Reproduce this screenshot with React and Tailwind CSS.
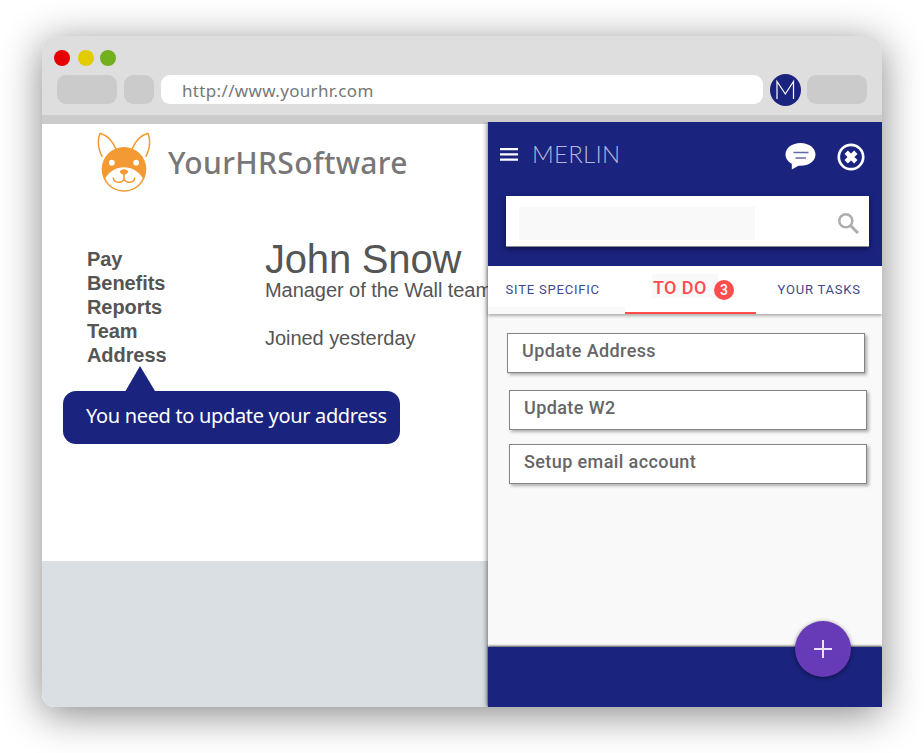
import React from "react";

const navItems = ["Pay", "Benefits", "Reports", "Team", "Address"];

function FoxLogo() {
  return (
    <svg className="h-[62px] w-[56px] shrink-0" viewBox="198 318 168 186" fill="none">
      <path d="M216 394 C205 372 202 346 210 325 C231 331 248 350 257 370" stroke="#f49a33" strokeWidth="4.5" strokeLinecap="round" strokeLinejoin="round" />
      <path d="M348 394 C359 372 362 346 354 325 C333 331 316 350 307 370" stroke="#f49a33" strokeWidth="4.5" strokeLinecap="round" strokeLinejoin="round" />
      <circle cx="282" cy="433" r="67" fill="#f49a33" />
      <path d="M226 459 C240 438 259 427 282 427 C305 427 324 438 338 459 C329 482 307 496 282 496 C257 496 235 482 226 459Z" fill="#fff" />
      <circle cx="245.500" cy="413" r="8.500" fill="#fff" />
      <circle cx="318.500" cy="413" r="8.500" fill="#fff" />
      <path d="M269 440 C272 430 292 430 295 440 C293 445 287 448 282 449 C277 448 271 445 269 440Z" fill="#f49a33" />
      <path d="M250 459 C250 475 279 476 282 460 V447 V460 C285 476 314 475 314 459" stroke="#f49a33" strokeWidth="4.500" strokeLinecap="round" />
    </svg>
  );
}

function BrowserBar() {
  return (
    <header className="h-[79px] rounded-t-[14px] bg-[#dedede] pt-[13.5px]">
      <div className="flex pl-[12.3px]">
        <span className="size-[16px] rounded-full bg-[#e60000]" />
        <span className="ml-[8px] size-[16px] rounded-full bg-[#e2cb00]" />
        <span className="ml-[6px] size-[16px] rounded-full bg-[#72b01d]" />
      </div>
      <div className="mt-[8.5px] flex items-start pl-[15px]">
        <span className="mt-[1px] h-[29px] w-[60px] rounded-[9px] bg-[#cbcbcb]" />
        <span className="mt-[1px] ml-[7px] h-[29px] w-[30px] rounded-[9px] bg-[#cbcbcb]" />
        <div className="mt-[1px] ml-[7px] flex h-[29px] w-[602px] items-center rounded-[9px] bg-white pl-[21px] font-['Noto_Sans',sans-serif] text-[17px] leading-[29px] tracking-[0.34px] text-[#777]">
          <span className="translate-y-[1px]">http://www.yourhr.com</span>
        </div>
        <svg className="ml-[7px] h-[32px] w-[31px]" viewBox="0 0 31 32" fill="none">
          <ellipse cx="15.500" cy="16" rx="15.500" ry="16" fill="#1a237e" />
          <path d="M7 25 V7.500 L15.300 20 L23.500 7.500 V25" stroke="#fff" strokeWidth="1.200" />
        </svg>
        <span className="mt-[1px] ml-[6px] h-[29px] w-[60px] rounded-[9px] bg-[#cbcbcb]" />
      </div>
    </header>
  );
}

function SitePage() {
  return (
    <main className="flex w-[446px] shrink-0 flex-col overflow-hidden rounded-bl-[13px] bg-white">
      <div className="flex h-[437px] shrink-0 flex-col">
        <div className="flex pt-[7px] pl-[54px]">
          <FoxLogo />
          <h1 className="ml-[16px] font-['Noto_Sans',sans-serif] text-[30px] font-medium leading-[63px] tracking-[0.35px] text-[#777]">YourHRSoftware</h1>
        </div>
        <div className="mt-[53px] flex pl-[45px] font-['Liberation_Sans',sans-serif] text-[20px] leading-[24px] text-[#555]">
          <ul className="w-[178px] shrink-0 font-bold tracking-[-0.08px]">
            {navItems.map((item) => <li key={item}>{item}</li>)}
          </ul>
          <section className="-mt-[8px] whitespace-nowrap tracking-[-0.05px]">
            <h2 className="text-[40px] leading-[40px] tracking-[-0.2px]">John Snow</h2>
            <p className="-mt-px">Manager of the Wall team</p>
            <p className="mt-[24px]">Joined yesterday</p>
          </section>
        </div>
        <div className="ml-[21px] -mt-px w-[337px]">
          <svg className="ml-[62px] block h-[25px] w-[30px]" viewBox="0 0 30 25"><path d="M15 0 L30 25 H0.500Z" fill="#1a237e" /></svg>
          <div className="h-[53px] whitespace-nowrap rounded-[13px] bg-[#1a237e] pl-[23px] font-['Noto_Sans',sans-serif] text-[20px] leading-[50px] tracking-[-0.33px] text-white">
            You need to update your address
          </div>
        </div>
      </div>
      <div className="flex-1 bg-[#dadfe3]" />
    </main>
  );
}

function Task({ children, className }) {
  return (
    <li className={`h-[40px] w-[358px] border border-[#858585] bg-white pl-[14px] text-[18px] font-medium leading-[34px] tracking-[0.4px] text-[#666] shadow-[2px_2px_3px_rgba(0,0,0,0.3)] ${className}`}>
      {children}
    </li>
  );
}

function MerlinPanel() {
  return (
    <aside className="relative -mt-[2px] flex w-[394px] shrink-0 flex-col bg-[#f9f9f9] font-['Roboto',sans-serif] shadow-[-1px_0_5px_rgba(0,0,0,0.5)] [clip-path:inset(0_0_0_-12px)]">
      <div className="h-[144px] shrink-0 bg-[#1a237e]">
        <div className="flex h-[74px] pl-[12px]">
          <svg className="mt-[26px] h-[13px] w-[18px]" viewBox="0 0 18 13" fill="#fff"><path d="M0 0h18v2.200H0zM0 5.300h18v2.200H0zM0 10.600h18v2.200H0z" /></svg>
          <span className="mt-[17px] ml-[14px] w-[100px] font-['Lato',sans-serif] text-[24px] font-light leading-[30px] tracking-[0.25px] text-[#b4b7da]">MERLIN</span>
          <svg className="mt-[20px] ml-[153px] h-[29px] w-[31px]" viewBox="0 0 31 29" fill="none">
            <path d="M15.500 1 C7 1 .5 6 .5 12.500 C.5 16.500 3 19.700 6.800 21.700 L6.800 27.500 L13.500 23.700 C23 24.500 30.500 19.500 30.500 12.500 C30.500 6 24 1 15.500 1Z" fill="#fff" />
            <path d="M8.500 10.500h15M10.500 16h10.500" stroke="#6269ad" strokeWidth="1.500" />
          </svg>
          <svg className="mt-[21px] ml-[21px] size-[28px]" viewBox="0 0 28 28" fill="none" stroke="#fff">
            <circle cx="14" cy="14" r="12.200" strokeWidth="2.700" />
            <path d="M9.200 9.200L18.800 18.800M18.800 9.200L9.200 18.800" strokeWidth="4.800" />
          </svg>
        </div>
        <div className="ml-[18px] flex h-[51px] w-[363px] items-center justify-between border-b border-[#8b8d99] bg-white pl-[13px] pr-[10px] shadow-[0_2px_5px_rgba(0,0,0,0.5)]">
          <div className="mt-[4px] h-[33px] w-[236px] bg-[#f9f9f9]" />
          <svg className="mt-[4px] size-[21px]" viewBox="0 0 21 21" fill="none" stroke="#adadad">
            <circle cx="7.800" cy="7.800" r="6.500" strokeWidth="2.500" />
            <path d="M12.500 12.500L20 20" strokeWidth="3" />
          </svg>
        </div>
      </div>
      <nav className="flex h-[48px] shrink-0 bg-white text-[13px] leading-[47px] tracking-[0.8px] text-[#3f478f] shadow-[0_2px_3px_rgba(0,0,0,0.3)]">
        <div className="flex w-[137px] flex-col"><span className="h-[41px] pl-[17.5px]">SITE SPECIFIC</span><span className="h-[7px] bg-[#f9f9f9]" /></div>
        <div className="flex w-[131px] justify-center border-b-2 border-[#ff4c4c] pt-[8px] pl-[5px]">
          <span className="h-[24px] w-[66px] bg-[#f9f9f9] pl-[1px] text-[18px] font-medium leading-[28px] tracking-[0.4px] text-[#ff4c4c]">TO DO</span>
          <span className="mt-[6px] -ml-[4px] size-[20px] rounded-full bg-[#ff4c4c] text-center text-[14px] font-medium leading-[20px] tracking-normal text-white">3</span>
        </div>
        <span className="pl-[21.5px]">YOUR TASKS</span>
      </nav>
      <ul className="flex h-[333px] shrink-0 flex-col pt-[19px]">
        <Task className="ml-[19px]">Update Address</Task>
        <Task className="mt-[17px] ml-[21px]">Update W2</Task>
        <Task className="mt-[14px] ml-[21px]">Setup email account</Task>
      </ul>
      <footer className="flex-1 bg-[#1a237e] shadow-[0_-1px_2px_rgba(0,0,0,0.7)]" />
      <button className="absolute right-[31px] bottom-[30px] flex size-[56px] items-center justify-center rounded-full bg-[#673ab7] shadow-[0_1px_4px_rgba(0,0,0,0.5)]">
        <svg className="size-[20px]" viewBox="0 0 20 20"><path d="M10 1V19M1 10H19" stroke="#e9e1f5" strokeWidth="2" /></svg>
      </button>
    </aside>
  );
}

export default function App() {
  return (
    <div className="h-[753px] w-[924px] overflow-hidden bg-white pt-[36px] pl-[42px]">
      <div className="flex h-[671px] w-[840px] flex-col rounded-tl-[14px] rounded-tr-[14px] rounded-bl-[13px] shadow-[0_7px_40px_rgba(0,0,0,0.48)]">
        <BrowserBar />
        <div className="h-[9px] shrink-0 bg-[#cbcbcb]" />
        <div className="flex h-[583px]">
          <SitePage />
          <MerlinPanel />
        </div>
      </div>
    </div>
  );
}
